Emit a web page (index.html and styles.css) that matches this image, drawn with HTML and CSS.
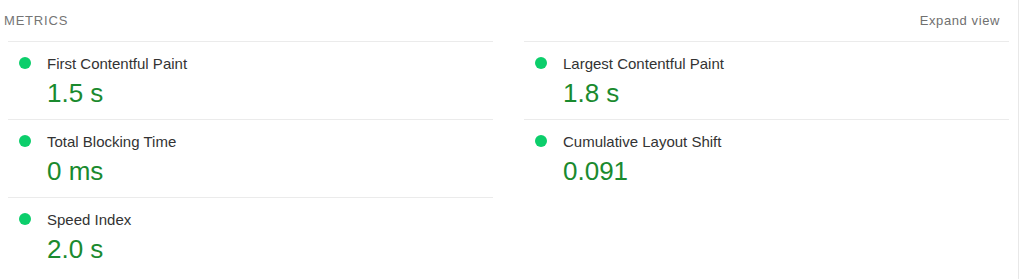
FILE: index.html
```html
<!DOCTYPE html>
<html>
<head>
<meta charset="utf-8">
<link rel="stylesheet" href="styles.css">
</head>
<body>
<div class="panel">
  <div class="header">
    <span class="title">METRICS</span>
    <span class="toggle">Expand view</span>
  </div>
  <div class="grid">
    <div class="metric">
      <div class="name"><span class="dot"></span>First Contentful Paint</div>
      <div class="value">1.5 s</div>
    </div>
    <div class="metric">
      <div class="name"><span class="dot"></span>Largest Contentful Paint</div>
      <div class="value">1.8 s</div>
    </div>
    <div class="metric">
      <div class="name"><span class="dot"></span>Total Blocking Time</div>
      <div class="value">0 ms</div>
    </div>
    <div class="metric">
      <div class="name"><span class="dot"></span>Cumulative Layout Shift</div>
      <div class="value">0.091</div>
    </div>
    <div class="metric">
      <div class="name"><span class="dot"></span>Speed Index</div>
      <div class="value">2.0 s</div>
    </div>
  </div>
</div>
</body>
</html>
```
FILE: styles.css
```css
html, body {
  margin: 0;
  padding: 0;
  background: #fff;
}
body {
  font-family: "Liberation Sans", Arial, sans-serif;
  height: 279px;
  overflow: hidden;
}
.panel {
  width: 1018px;
  height: 279px;
  border-right: 1px solid #e8e8e8;
}
.header {
  display: flex;
  justify-content: space-between;
  align-items: center;
  height: 41px;
  padding: 0 18px 0 4px;
}
.title {
  font-size: 13px;
  letter-spacing: 0.8px;
  color: #757575;
}
.toggle {
  font-size: 13px;
  letter-spacing: 0.6px;
  color: #707070;
}
.grid {
  display: grid;
  grid-template-columns: 485px 485px;
  column-gap: 31px;
  padding-left: 8px;
}
.metric {
  border-top: 1px solid #ebebeb;
  padding: 11px 0 6px 11px;
}
.name {
  display: flex;
  align-items: center;
  height: 20px;
  font-size: 15px;
  color: #333;
}
.dot {
  width: 12px;
  height: 12px;
  border-radius: 50%;
  background: #0cce6b;
  margin-right: 16px;
  flex: none;
}
.value {
  font-size: 26px;
  line-height: 40px;
  color: #1a8a2e;
  padding-left: 28px;
}
```
